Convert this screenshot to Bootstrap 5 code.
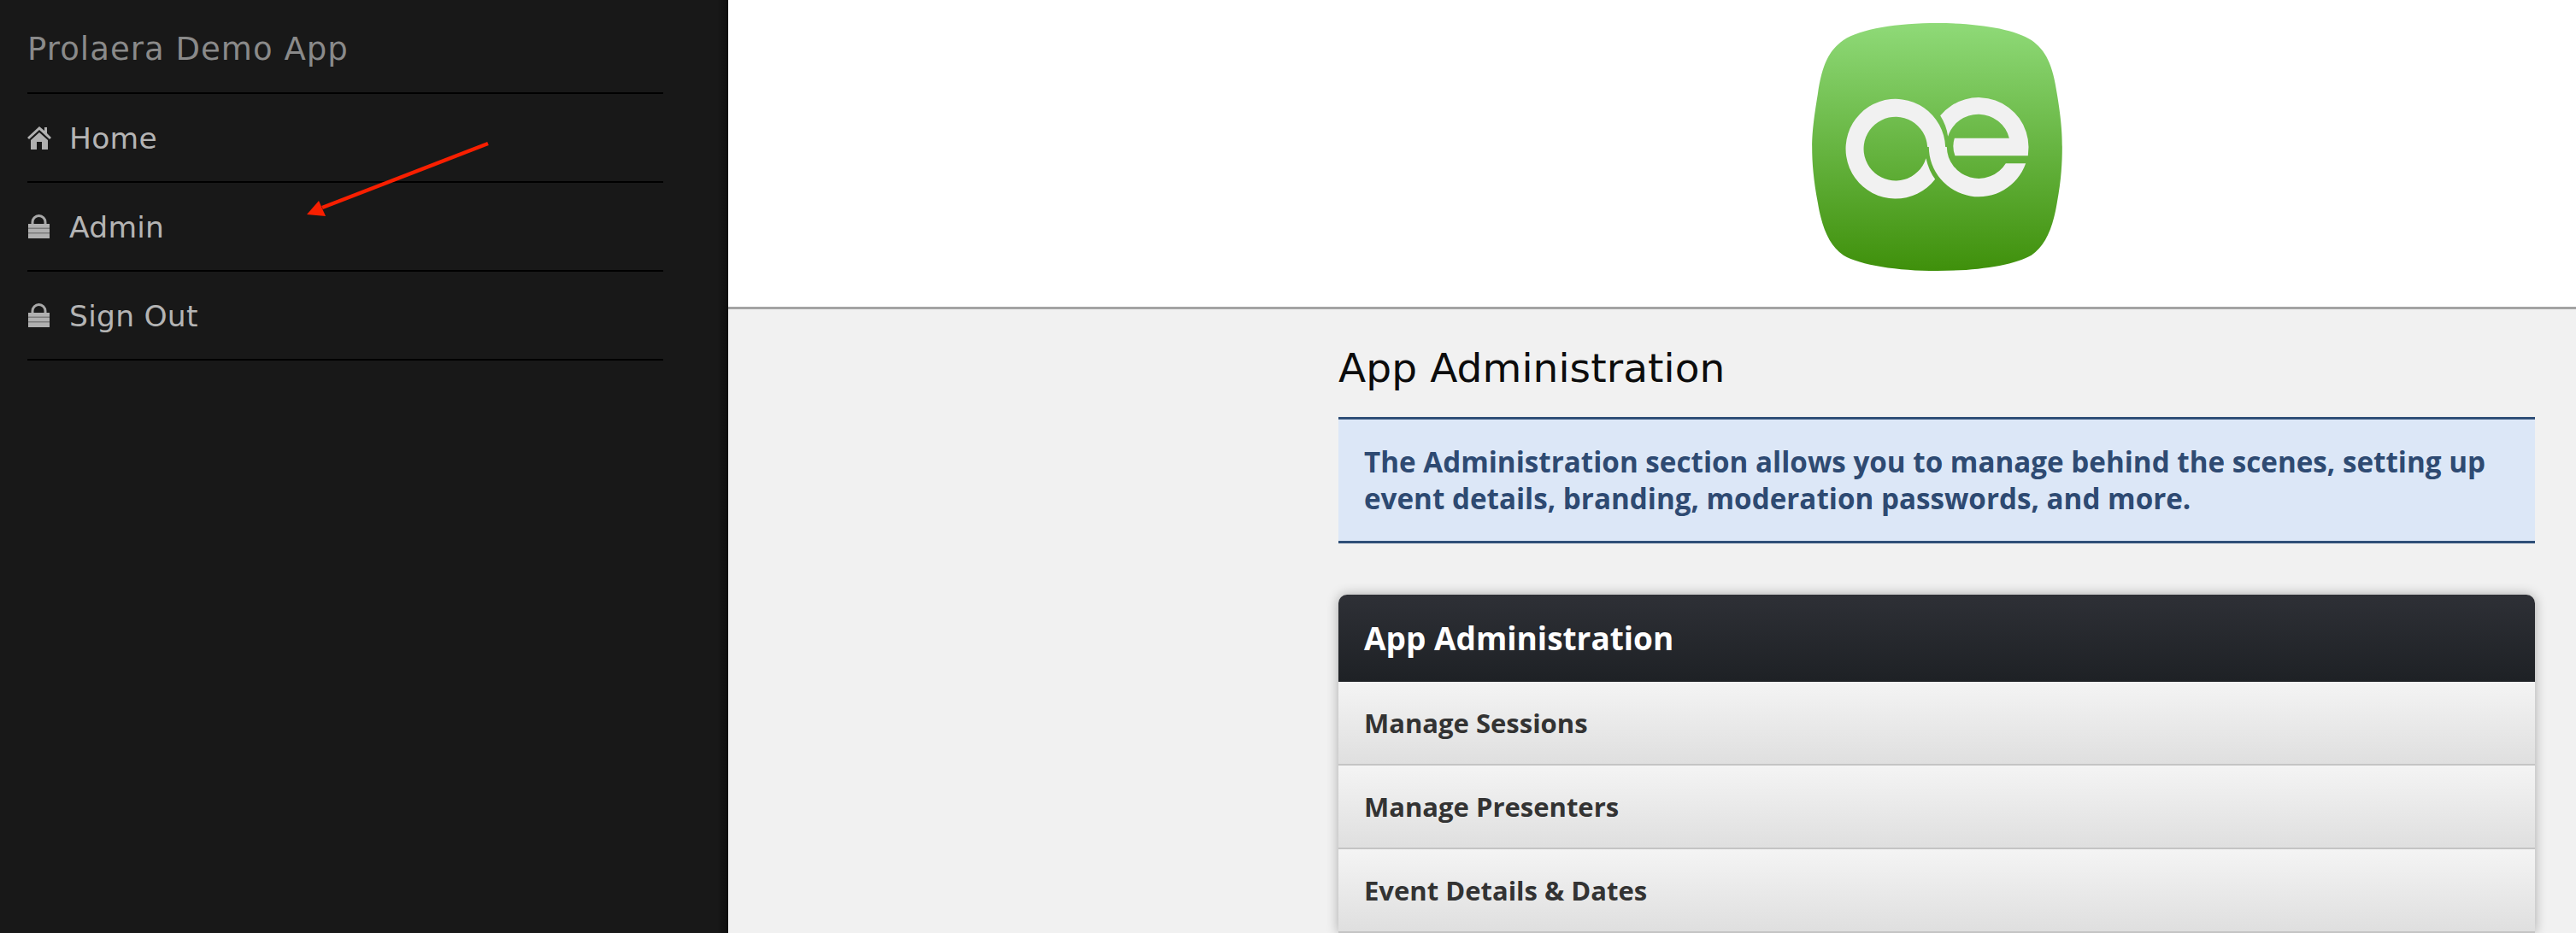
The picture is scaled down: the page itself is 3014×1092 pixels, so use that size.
<!DOCTYPE html>
<html lang="en">
<head>
<meta charset="utf-8">
<title>Prolaera Demo App</title>
<link href="https://cdn.jsdelivr.net/npm/bootstrap@5.3.0/dist/css/bootstrap.min.css" rel="stylesheet">
<style>
html,body{height:1092px;overflow:hidden}
body{font-family:"DejaVu Sans","Liberation Sans",sans-serif;background:#f1f1f1;color:#000}
.shell{height:1092px}
.side{width:852px;flex:none;background:linear-gradient(90deg,#181818 98.5%,#0f0f0f);padding:0 76px 0 32px;position:relative}
.brand{height:110px;line-height:115px;font-size:37px;color:#8a8a8a;border-bottom:2px solid #000;letter-spacing:1.05px;white-space:nowrap}
.sidelink{height:104px;border-bottom:2px solid #000;color:#b4b4b4;font-size:34.5px;text-decoration:none;letter-spacing:.25px}
.sidelink>span:last-child{padding-top:3px}
.iconbox{width:49px;flex:none}
.lockglyph{margin-left:1px}
.pointer{position:absolute;left:350px;top:160px;width:240px;height:100px}
.main{min-width:0}
.topbar{height:362px;background:#fff;border-bottom:3px solid #a3a3a3;padding:27px 48px 0 714px}
.logo{width:293px;height:290px}
.column{width:1400px;margin-left:714px}
.pagehead{font-size:47px;font-weight:400;margin:0;padding-top:41px;height:126px;line-height:1.2;color:#0c0c0c;letter-spacing:.1px}
.note{background:#dce7f7;border-top:3px solid #2f4f78;border-bottom:3px solid #2f4f78;color:#2e4a72;font-family:"Open Sans",sans-serif;font-weight:700;font-size:33.2px;line-height:43px;padding:28px 30px;height:148px}
.adminpanel{margin-top:60px;border:0;border-radius:10px 10px 0 0;box-shadow:0 0 14px rgba(0,0,0,.3);background:transparent}
.panelhead{height:102px;background:linear-gradient(#2e3036,#1e2125);color:#fff;font-family:"Open Sans",sans-serif;font-weight:700;font-size:37px;padding:0 30px;border-radius:10px 10px 0 0}
.panelrow{height:98px;background:linear-gradient(#f4f4f4,#dfdfdf);border-bottom:2px solid #c4c4c4;color:#333;font-family:"Open Sans",sans-serif;font-weight:700;font-size:31px;padding:0 30px;text-decoration:none}
</style>
</head>
<body>
<div class="shell d-flex">
  <nav class="side">
    <div class="brand">Prolaera Demo App</div>
    <a class="sidelink d-flex align-items-center" href="#">
      <span class="iconbox d-flex"><svg viewBox="0 0 28 27" width="28" height="27"><path fill="#b0b0b0" d="M14 0 0 13l2 2L14 4l12 11 2-2-5-5V1h-3v4zM4 16 14 7l10 9v11h-7v-9h-6v9H4z"/></svg></span>
      <span>Home</span></a>
    <a class="sidelink d-flex align-items-center" href="#">
      <span class="iconbox d-flex"><svg class="lockglyph" viewBox="0 0 25 28" width="25" height="28"><path fill="none" stroke="#a8a8a8" stroke-width="3" d="M5 12V9a7.500 7.500 0 0 1 15 0v3"/><path fill="#b0b0b0" d="M0 11h25v17H0z"/><path fill="#7c7c7c" d="M0 15.500h25v1.500H0zM0 21h25v1.500H0z"/></svg></span>
      <span>Admin</span></a>
    <a class="sidelink d-flex align-items-center" href="#">
      <span class="iconbox d-flex"><svg class="lockglyph" viewBox="0 0 25 28" width="25" height="28"><path fill="none" stroke="#a8a8a8" stroke-width="3" d="M5 12V9a7.500 7.500 0 0 1 15 0v3"/><path fill="#b0b0b0" d="M0 11h25v17H0z"/><path fill="#7c7c7c" d="M0 15.500h25v1.500H0zM0 21h25v1.500H0z"/></svg></span>
      <span>Sign Out</span></a>
    <svg class="pointer" viewBox="0 0 240 100"><path d="M221 8 27 83" stroke="#f81f00" stroke-width="4.5" fill="none"/><path d="M9 91 23 75 31 93z" fill="#f81f00"/></svg>
  </nav>
  <main class="main flex-grow-1">
    <header class="topbar d-flex justify-content-center align-items-start">
      <svg class="logo" viewBox="120 80 878 870">
        <defs><linearGradient id="lg" x1="0" y1="0" x2="0" y2="1"><stop offset="0" stop-color="#8fda78"/><stop offset="1" stop-color="#3f900b"/></linearGradient></defs>
        <path fill="url(#lg)" d="M559 80C700 80 830 100 890 140 940 175 965 225 980 330 995 420 998 470 998 515 998 570 995 630 980 710 965 800 940 860 890 895 830 930 700 950 559 950 420 950 290 930 230 895 180 860 155 800 140 710 125 630 120 570 120 515 120 470 125 420 140 330 155 225 180 175 230 140 290 100 420 80 559 80Z"/>
        <g fill="#f1f1f1">
          <path d="M552 628A175 175 0 1 1 588 515H525A112 112 0 1 0 520 555Q530 600 552 628Z"/>
          <path d="M593 515A112 112 0 0 0 800 573H870A175 175 0 0 1 530 515Z"/>
          <path d="M570 405A175 175 0 0 1 880 515L878 546H622Q610 515 620 484H812A112 112 0 0 0 597 478Q592 440 570 405Z"/>
        </g>
      </svg>
    </header>
    <section class="column">
      <h1 class="pagehead">App Administration</h1>
      <div class="note">The Administration section allows you to manage behind the scenes, setting up event details, branding, moderation passwords, and more.</div>
      <div class="card adminpanel">
        <div class="panelhead d-flex align-items-center">App Administration</div>
        <a class="panelrow d-flex align-items-center" href="#">Manage Sessions</a>
        <a class="panelrow d-flex align-items-center" href="#">Manage Presenters</a>
        <a class="panelrow d-flex align-items-center" href="#">Event Details &amp; Dates</a>
      </div>
    </section>
  </main>
</div>
<script src="https://cdn.jsdelivr.net/npm/bootstrap@5.3.0/dist/js/bootstrap.bundle.min.js"></script>
</body>
</html>
